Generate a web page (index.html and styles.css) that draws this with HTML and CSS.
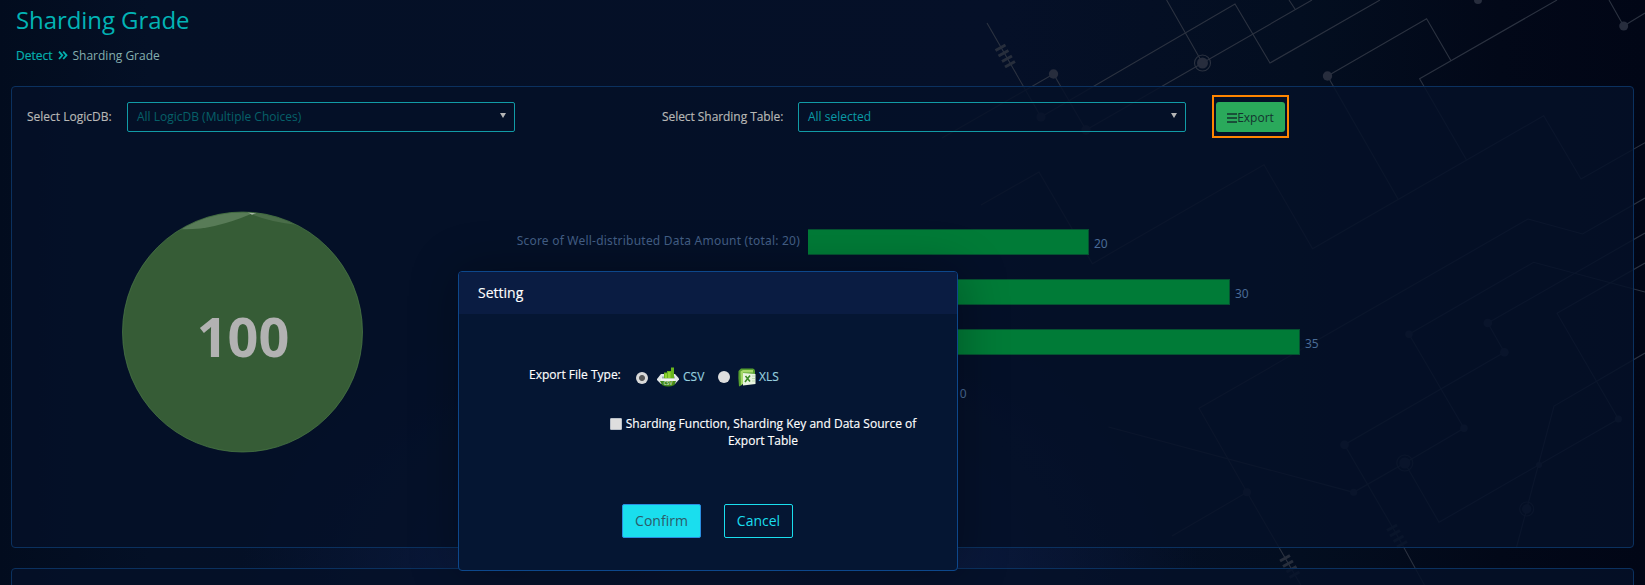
FILE: index.html
```
<!DOCTYPE html>
<html lang="en">
<head>
<meta charset="utf-8">
<title>Sharding Grade</title>
<link rel="stylesheet" href="styles.css">
</head>
<body>
<svg class="circuit" width="1645" height="585" viewBox="0 0 1645 585" aria-hidden="true">
  <g class="wires">
    <path d="M987 23L1041 117L1235 4L1270 63L1380 0"/>
    <path d="M942 138L1053.500 74L1086 130L1202.500 63L1312 0M1202.500 63L1166.600 0M1295 9L1289 0"/>
    <path d="M1451 60.700L1426.600 18.700L1327.500 76L1398 199"/>
    <path d="M1557 0L1419.600 78.700L1466.400 159.700"/>
    <path d="M981 205L1039 172L1092.400 263.700L1264 164.700L1312.600 248.700L1543.700 115.700L1581 179L1645 142.700"/>
    <path d="M1609 0L1623.700 26L1645 13"/>
    <path d="M1645 198L1582.600 234L1528 219L1199 408.300L1247 492.300L1300.800 585M1247 492.300L1172 536"/>
    <path d="M1645 292L1533.600 262.300L1409 334.300L1464 428.300L1404.800 463L1353.600 492.300L1108.500 427"/>
    <path d="M1404.800 463L1439 522.300L1618.400 419L1557 313.300L1645 263"/>
    <path d="M1645 233L1487.800 323L1504.400 352.300L1344.500 444.700L1397 535L1424.400 585"/>
    <path d="M1645 353L1554 406L1526.700 509L1516.600 547"/>
    <circle cx="1202.500" cy="63" r="8"/><circle cx="1404.800" cy="463" r="8"/><circle cx="1526.700" cy="509" r="7"/>
  </g>
  <g class="nodes">
    <circle cx="1041" cy="117" r="4.500"/><circle cx="1053.500" cy="74" r="4.700"/><circle cx="1086" cy="130" r="4.700"/>
    <circle cx="1202.500" cy="63" r="5.500"/><circle cx="1327.500" cy="76" r="4.700"/><circle cx="1478" cy="0" r="4"/>
    <circle cx="1623.700" cy="26" r="4.500"/><circle cx="1409" cy="334.300" r="3.700"/><circle cx="1487.800" cy="323" r="4.300"/>
    <circle cx="1504.400" cy="352.300" r="4.300"/><circle cx="1464" cy="428.300" r="3.700"/><circle cx="1344.500" cy="444.700" r="4.300"/>
    <circle cx="1404.800" cy="463" r="5.500"/><circle cx="1353.600" cy="492.300" r="3.500"/><circle cx="1247" cy="492.300" r="4"/>
    <circle cx="1618.400" cy="419" r="3.500"/><circle cx="1526.700" cy="509" r="4.700"/><circle cx="1539" cy="465" r="3"/>
  </g>
  <path class="coils" d="M995.500 50.500l10-5.500M998.500 56l10-5.500M1002 61.500l10-5.500M1005 67l10-5.500M1280 561l10-5.500M1283 566.500l10-5.500M1286.500 572l10-5.500M1289.500 577.500l10-5.500M1387 530.500l10-5.500M1390 536l10-5.500M1393.500 541.500l10-5.500M1397 547l10-5.500"/>
</svg>
<div class="page">
  <header class="head">
    <h1 class="title">Sharding Grade</h1>
    <nav class="crumbs">
      <a class="crumb-link">Detect</a>
      <svg class="chevrons" width="10" height="9" viewBox="0 0 10 9"><path d="M1 .7L4.300 4.300L1 8M5.200 .7L8.500 4.300L5.200 8"/></svg>
      <span class="crumb-here">Sharding Grade</span>
    </nav>
  </header>
  <section class="panel">
    <div class="filters">
      <span class="label label-db">Select LogicDB:</span>
      <div class="select"><span class="placeholder">All LogicDB (Multiple Choices)</span><i class="arrow"></i></div>
      <span class="label label-table">Select Sharding Table:</span>
      <div class="select"><span class="value">All selected</span><i class="arrow"></i></div>
      <div class="highlight">
        <button class="export"><svg width="10" height="10" viewBox="0 0 10 10"><path d="M0 1H10M0 5H10M0 9H10"/></svg><span>Export</span></button>
      </div>
    </div>
    <div class="charts">
      <svg class="gauge" width="242" height="242" viewBox="0 0 242 242">
        <defs><clipPath id="disc"><circle cx="120.500" cy="121" r="119.500"/></clipPath></defs>
        <circle class="gauge-body" cx="120.500" cy="121" r="120"/>
        <g clip-path="url(#disc)">
          <path class="wave-back" d="M50 17.500Q84 22 129 3L136 0H50Z"/>
          <path class="wave-side" d="M129 3Q147 11 176 14V0H136Z"/>
          <path class="wave-top" d="M125 .8H137L130 3.800Z"/>
        </g>
        <text class="gauge-text" x="121" y="146">100</text>
      </svg>
      <div class="bars">
        <div class="row"><span class="name">Score of Well-distributed Data Amount (total: 20)</span><div class="bar" style="width:281px"></div><span class="num">20</span></div>
        <div class="row"><span class="name"></span><div class="bar" style="width:422px"></div><span class="num">30</span></div>
        <div class="row"><span class="name"></span><div class="bar" style="width:492px"></div><span class="num">35</span></div>
        <div class="row"><span class="name"></span><div class="bar" style="width:140px"></div><span class="num">10</span></div>
      </div>
    </div>
  </section>
  <section class="panel panel-next"></section>
</div>
<div class="modal">
  <div class="modal-head">Setting</div>
  <div class="modal-body">
    <div class="types">
      <span class="types-label">Export File Type:</span>
      <i class="radio radio-on"></i>
      <svg class="icon-csv" width="22" height="20" viewBox="0 0 22 20">
        <path fill="#e3e8e8" d="M0 12L4 7H18L22 11.500V12.500L18 17H4L0 13Z"/>
        <path fill="#9caab3" d="M5 9.500H18V13H5Z"/>
        <path fill="#68b51d" d="M7 11.500V5.500H10V4H14V.5H17V11.500Z"/>
        <path fill="#92d334" d="M8 6.500H10V11H8ZM11 5H13.500V11H11Z"/>
        <path fill="#f2f4ef" d="M4 11.500H18V14H4Z"/>
        <path fill="#438a1c" d="M3 14H19L17.500 18Q11 21 5 18Z"/>
        <text x="11" y="18" class="tiny">CSV</text>
      </svg>
      <span class="type-name type-csv">CSV</span>
      <i class="radio radio-second"></i>
      <svg class="icon-xls" width="18" height="19" viewBox="0 0 18 19">
        <path fill="#57a02f" d="M.5 3L3 .5H15Q17 1 17 3V6H4V17L1 18.500Q0 10 .5 3Z"/>
        <path fill="#a6d86b" d="M2.500 3.500L5 2H15V4.500H5V16L3 17Z"/>
        <path fill="#e9f4e0" d="M5 5L17.500 6V16L5 17.500Z"/>
        <path fill="#bcdcae" d="M14 7.500H17V8.500H14ZM14 10H17V11H14ZM14 12.500H17V13.500H14Z"/>
        <path stroke="#3c8a28" stroke-width="1.600" fill="none" d="M7.500 8L12 13.500M12 7.500L7 14"/>
      </svg>
      <span class="type-name">XLS</span>
    </div>
    <div class="option"><i class="check"></i>Sharding Function, Sharding Key and Data Source of<br>Export Table</div>
    <div class="actions"><button class="btn confirm">Confirm</button><button class="btn cancel">Cancel</button></div>
  </div>
</div>
</body>
</html>
```
FILE: styles.css
```
* { box-sizing: border-box; }
html, body { height: 100%; overflow: hidden; }
body {
  margin: 0;
  position: relative;
  font: 12px/16px "Open Sans", "Noto Sans", sans-serif;
  background:
    radial-gradient(ellipse 480px 300px at 720px 585px, #10234f 0%, rgba(11, 27, 64, .8) 50%, rgba(4, 16, 36, 0) 100%),
    linear-gradient(90deg, #020c1e 0, #041026 150px, #051028 1000px, #030e20 1300px, #020818 1500px, #010616 1645px);
}
.circuit { position: absolute; left: 0; top: 0; }
.wires { fill: none; stroke: #2b3240; stroke-width: 1.1; }
.nodes { fill: #272d3d; }
.coils { fill: none; stroke: #272e3c; stroke-width: 3; }
.page { position: relative; height: 585px; overflow: hidden; padding: 0 11px; }
.head { height: 86px; padding: 4px 0 0 5px; }
.title { margin: 0; font-size: 24px; line-height: 32px; font-weight: 400; color: #02b3b5; letter-spacing: -.08px; }
.crumbs { display: flex; align-items: center; margin-top: 12px; height: 16px; }
.crumb-link { color: #04b0ae; -webkit-text-stroke: .2px #04b0ae; }
.chevrons { margin: -2px 5px 0 5px; }
.chevrons path { fill: none; stroke: #04b0ae; stroke-width: 1.8; }
.crumb-here { color: #86afaf; }
.panel { height: 462px; border: 1px solid #0b315f; border-radius: 4px; background: rgba(5, 17, 40, .85); }
.panel-next { margin-top: 20px; height: 80px; }
.filters { display: flex; align-items: center; height: 43px; margin-top: 8px; padding-left: 15px; }
.label { color: #b8b8b6; white-space: nowrap; padding-top: 1px; -webkit-text-stroke: .15px #b8b8b6; }
.label-db { width: 100px; }
.label-table { width: 136px; margin-left: 147px; letter-spacing: -.06px; }
.select { width: 388px; height: 30px; border: 1px solid #119ba6; border-radius: 2px; display: flex; align-items: center; justify-content: space-between; padding: 0 8px 0 9px; }
.placeholder { color: #066069; }
.value { color: #0a9aa6; }
.arrow { margin-top: -3px; border: 3px solid transparent; border-top: 5px solid #b5b5b5; border-bottom: 0; }
.highlight { margin-left: 26px; width: 77px; height: 43px; border: 2px solid #ff8500; padding: 5px 2px; }
.export { display: flex; align-items: center; justify-content: center; width: 69px; height: 30px; border: 0; border-radius: 3px; padding: 2px 0 0; background: #2aa95b; color: #14332f; font: inherit; }
.export path { stroke: #14332f; stroke-width: 1.3; }
.charts { display: flex; padding: 73px 0 0 110px; }
.gauge { display: block; flex: none; }
.gauge-body { fill: #365c36; stroke: #4d7d47; stroke-width: .7; }
.wave-back { fill: #587b57; }
.wave-side { fill: #4a6d49; }
.wave-top { fill: #a6b7a5; }
.gauge-text { fill: #b2b2b2; font: 700 54px "Noto Sans", "Open Sans", sans-serif; text-anchor: middle; }
.bars { display: flex; flex-direction: column; gap: 24px; padding-top: 18px; }
.row { display: flex; align-items: center; height: 26px; }
.name { width: 436px; text-align: right; color: #435f86; padding-bottom: 3px; font: 12px/17px "Noto Sans", sans-serif; letter-spacing: .22px; white-space: nowrap; }
.bar { margin-left: 8px; height: 26px; background: #007b37; border: 1px solid #055131; border-left: 0; }
.num { margin: 2px 0 0 5px; color: #496b96; font: 12px/17px "Noto Sans", sans-serif; }
.modal { position: absolute; left: 458px; top: 271px; width: 500px; height: 300px; border: 1px solid #0d478b; border-radius: 4px; background: #051633; box-shadow: 1px 1px 50px rgba(0, 0, 0, .3); color: #fff; overflow: hidden; -webkit-text-stroke: .15px; }
.modal-head { height: 42px; padding: 0 19px; background: #0a1c42; font-size: 14px; line-height: 42px; }
.types { display: flex; align-items: center; height: 20px; margin-top: 53px; padding-left: 70px; }
.types-label { width: 107px; padding-bottom: 4px; white-space: nowrap; }
.radio { width: 12px; height: 12px; border-radius: 50%; background: #dedede; flex: none; }
.radio-on { background: radial-gradient(circle, #585858 0 2.500px, #d9d9d9 3.500px); margin-top: 1px; }
.icon-csv { margin: 0 4px 0 9px; }
.tiny { fill: #b9d3a9; font-size: 5px; font-weight: 700; text-anchor: middle; }
.type-name { color: #97cfdf; white-space: nowrap; }
.type-csv { width: 35px; }
.icon-xls { margin: 0 3px 0 8px; }
.option { margin: 28px 0 0 110px; text-align: center; line-height: 17px; }
.check { display: inline-block; vertical-align: -2px; width: 12px; height: 12px; margin-right: 4px; background: #dedede; border: 1px solid #b9bfc8; border-radius: 1px; }
.actions { display: flex; gap: 23px; margin: 55px 0 0 163px; }
.btn { height: 34px; border-radius: 2px; padding: 0; font: 14px/20px "Open Sans", sans-serif; -webkit-text-stroke: 0; }
.confirm { width: 79px; background: #1adeee; border: 1px solid #2a8ee0; color: #2c5b69; }
.cancel { width: 69px; background: transparent; border: 1px solid #1adeee; color: #1adeee; }
```
